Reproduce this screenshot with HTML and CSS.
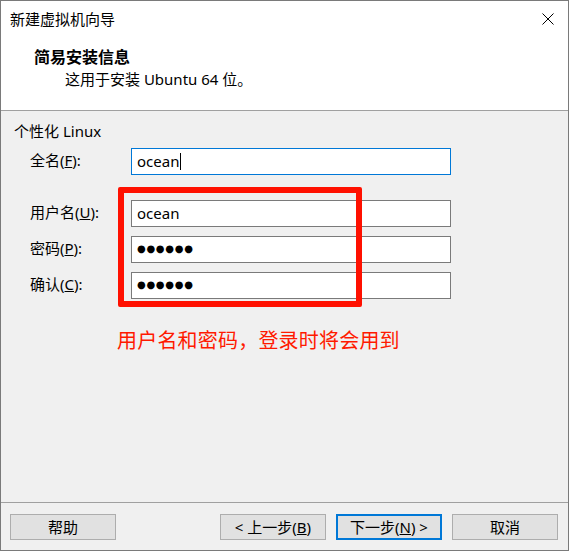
FILE: index.html
```html
<!DOCTYPE html>
<html lang="zh-CN">
<head>
  <meta charset="UTF-8">
  <meta name="viewport" content="width=device-width, initial-scale=1.0">
  <title>新建虚拟机向导</title>
  <link rel="stylesheet" href="styles.css">
</head>
<body>

<div class="window">
  <div class="titlebar">
    <span class="title">新建虚拟机向导</span>
    <span class="close">
      <svg width="12" height="12" viewBox="0 0 12 12"><path d="M0.5 0.5 L11.5 11.5 M11.5 0.5 L0.5 11.5" stroke="#000" stroke-width="1" fill="none"/></svg>
    </span>
  </div>

  <div class="header">
    <div class="header-title">简易安装信息</div>
    <div class="header-sub">这用于安装 Ubuntu 64 位。</div>
  </div>

  <div class="content">
    <div class="group-label">个性化 Linux</div>
    <div class="form">
      <label class="label">全名(<u>F</u>):</label>
      <div class="field focused"><span class="caret">ocean</span></div>

      <label class="label spaced">用户名(<u>U</u>):</label>
      <div class="field spaced">ocean</div>

      <label class="label">密码(<u>P</u>):</label>
      <div class="field"><span class="dots">●●●●●●</span></div>

      <label class="label">确认(<u>C</u>):</label>
      <div class="field"><span class="dots">●●●●●●</span></div>
    </div>
    <div class="note">用户名和密码，登录时将会用到</div>
    <!-- annotation box drawn over the fields -->
    <div class="mark"></div>
  </div>

  <div class="footer">
    <button class="btn">帮助</button>
    <div class="nav">
      <button class="btn">&lt; 上一步(<u>B</u>)</button>
      <button class="btn default">下一步(<u>N</u>) &gt;</button>
      <button class="btn">取消</button>
    </div>
  </div>
</div>

</body>
</html>
```

FILE: styles.css
```css
body {
  margin: 0;
  background: #fff;
  color: #000;
  font-family: "Noto Sans", "Noto Sans CJK SC", sans-serif;
  font-size: 15px;
}

.window {
  width: 569px;
  height: 551px;
  box-sizing: border-box;
  border: 1px solid #7a7a7a;
  background: #f0f0f0;
  display: flex;
  flex-direction: column;
}

.titlebar {
  height: 36px;
  background: #fff;
  display: flex;
  align-items: center;
  padding-left: 9px;
}

.title {
  line-height: 20px;
}

.close {
  margin-left: auto;
  width: 40px;
  height: 36px;
  display: flex;
  align-items: center;
  justify-content: center;
}

.header {
  height: 74px;
  box-sizing: border-box;
  background: #fff;
  border-bottom: 1px solid #a0a0a0;
  padding-top: 9px;
}

.header-title {
  font-size: 16px;
  font-weight: bold;
  line-height: 22px;
  padding-left: 33px;
}

.header-sub {
  line-height: 22px;
  padding-left: 64px;
}

.content {
  flex: 1;
  position: relative;
  padding-top: 10px;
}

.group-label {
  line-height: 20px;
  padding-left: 13px;
}

.form {
  display: grid;
  grid-template-columns: 101px 320px;
  row-gap: 9px;
  margin-top: 7px;
  padding-left: 29px;
}

.label {
  line-height: 20px;
  align-self: center;
  padding-bottom: 3px;
}

.spaced {
  margin-top: 16px;
}

.field {
  height: 27px;
  box-sizing: border-box;
  border: 1px solid #7a7a7a;
  background: #fff;
  padding-left: 5px;
  padding-bottom: 1px;
  display: flex;
  align-items: center;
  line-height: 20px;
}

.field.focused {
  border-color: #0078d7;
}

.caret {
  border-right: 1px solid #000;
  padding-right: 1px;
  line-height: 17px;
}

.dots {
  font-family: "DejaVu Sans", sans-serif;
  font-size: 10px;
  letter-spacing: 0.7px;
}

.note {
  margin-top: 27px;
  padding-left: 116px;
  color: #ff1a00;
  font-family: "Noto Sans CJK SC", sans-serif;
  font-size: 20px;
  letter-spacing: 0.2px;
  line-height: 28px;
}

.mark {
  position: absolute;
  left: 117px;
  top: 76px;
  width: 244px;
  height: 120px;
  box-sizing: border-box;
  border: 6px solid #ff1000;
  border-radius: 2px;
}

.footer {
  border-top: 1px solid #a0a0a0;
  padding: 11px 10px 10px 9px;
  display: flex;
  justify-content: space-between;
}

.nav {
  display: flex;
  gap: 10px;
}

.btn {
  width: 106px;
  height: 26px;
  box-sizing: border-box;
  border: 1px solid #adadad;
  background: #e1e1e1;
  font-family: "Noto Sans", "Noto Sans CJK SC", sans-serif;
  font-size: 15px;
  color: #000;
  padding: 0;
  line-height: 20px;
}

.btn.default {
  border: 2px solid #0078d7;
}
```
